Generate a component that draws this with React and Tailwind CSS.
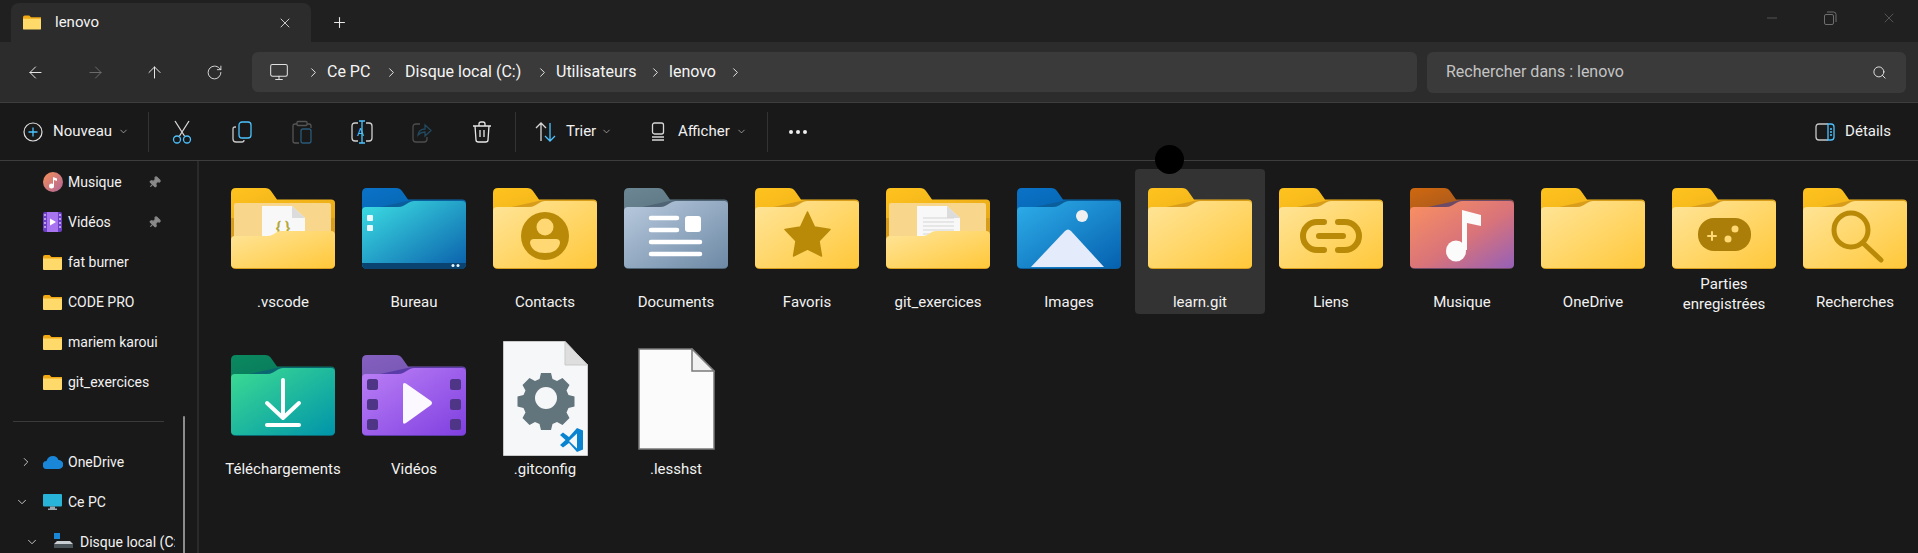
import { ArrowLeft, ArrowRight, ArrowUp, RotateCw, Monitor, ChevronRight, ChevronDown, Search, X, Plus, Minus, Pin } from "lucide-react";

const font = { fontFamily: '"Roboto", "Noto Sans", sans-serif' };

const gold = { back: ["#ffc31f", "#e6a714"], front: ["#ffe59a", "#ffc83a"], edge: "#d99d1c" };

// generic win11 style folder, 104x81
function Folder({ id, back = gold.back, front = gold.front, edge = gold.edge, open, children }) {
  return (
    <svg width="104" height="81" viewBox="0 0 104 81">
      <defs>
        <linearGradient id={`${id}b`} x1="0" y1="0" x2="1" y2="1">
          <stop offset="0" stopColor={back[0]} />
          <stop offset="1" stopColor={back[1]} />
        </linearGradient>
        <linearGradient id={`${id}f`} x1="0" y1="0" x2="1" y2="1">
          <stop offset="0" stopColor={front[0]} />
          {front[2] && <stop offset="0.55" stopColor={front[1]} />}
          <stop offset="1" stopColor={front[2] || front[1]} />
        </linearGradient>
      </defs>
      <path d="M0 5Q0 0 5 0H34Q38 0 40 3L46 11.5H100Q104 11.5 104 15V40H0Z" fill={`url(#${id}b)`} />
      {open ? (
        <>
          <path d="M0 30H104V76Q104 81 99 81H5Q0 81 0 76Z" fill={edge} />
          <rect x="3" y="15" width="97" height="40" rx="2" fill="#f8d78c" />
          <path d="M31 18H61L74 30V55H31Z" fill="#f8f8f8" />
          <path d="M61 18V30H74Z" fill="#dcdcdc" />
          {open === "code" ? (
            <text x="52" y="46" textAnchor="middle" fontSize="16" fontWeight="700" fill="#b5a83a" style={font}>{"{ }"}</text>
          ) : (
            <path d="M37 30H68M37 34H68M37 38H68M37 42H68M37 46H68" stroke="#d5d5d5" strokeWidth="1" />
          )}
          <path d="M0 52Q0 48 4 48H36Q39 48 42 46.5L46 44Q48 43 51 43H100Q104 43 104 47V76Q104 80 100 80H4Q0 80 0 76Z" fill={`url(#${id}f)`} />
        </>
      ) : (
        <>
          <path d="M0 23V76Q0 81 5 81H99Q104 81 104 76V16Q104 12 100 12H50Z" fill={edge} />
          <path d="M0 23Q0 19 4 19H36Q39 19 42 17.5L47 14.5Q49 13 52 13H100Q104 13 104 17V76Q104 80 100 80H4Q0 80 0 76Z" fill={`url(#${id}f)`} />
        </>
      )}
      {children}
    </svg>
  );
}

const GOLD_MARK = "#b98a08";

const Gitconfig = () => (
  <svg width="85" height="115" viewBox="0 0 85 115">
    <path d="M.5.5H62L84.5 24V114.5H.5Z" fill="#f6f7f8" stroke="#c9c9c9" />
    <path d="M62 .5V24H84.5Z" fill="#dedede" stroke="#c9c9c9" />
    <path
      d="M38 32h10l1.5 6 4.5 2 5.5-3 7 7-3 5.5 2 4.5 6 1.500v10l-6 1.500-2 4.500 3 5.500-7 7-5.500-3-4.500 2-1.500 6h-10l-1.500-6-4.500-2-5.500 3-7-7 3-5.500-2-4.500-6-1.500v-10l6-1.500 2-4.500-3-5.500 7-7 5.500 3 4.500-2z"
      fill="#62747c"
    />
    <circle cx="43" cy="57" r="11" fill="#f6f7f8" />
    <path d="M57 94l3-2.500 6 4.500 8-9 6 2.500v19l-6 2.500-8-9-6 4.500-3-2.500 5.500-5z" fill="#0a84d0" />
    <path d="M74 92.500v15L66 100z" fill="#f6f7f8" />
  </svg>
);

const Lesshst = () => (
  <svg width="77" height="102" viewBox="0 0 77 102">
    <path d="M1 1H54L76 23V101H1Z" fill="#fbfbfb" stroke="#7a7a7a" strokeWidth="1.500" />
    <path d="M54 1V23H76Z" fill="#f0f0f0" stroke="#7a7a7a" strokeWidth="1.500" />
  </svg>
);

const files = [
  { label: ".vscode", icon: <Folder id="a" open="code" /> },
  {
    label: "Bureau",
    icon: (
      <Folder id="b" back={["#0a72c8", "#045e9e"]} front={["#3de0e4", "#0a5fab"]} edge="#0a5e9c">
        <path d="M0 75H104V76Q104 81 99 81H5Q0 81 0 76Z" fill="#0a4370" />
        <rect x="5" y="27" width="6" height="6" rx="1" fill="#e8f8fb" />
        <rect x="5" y="37" width="6" height="6" rx="1" fill="#e8f8fb" />
        <circle cx="91" cy="77.500" r="1.500" fill="#e8f8fb" />
        <circle cx="96" cy="77.500" r="1.500" fill="#e8f8fb" />
      </Folder>
    ),
  },
  {
    label: "Contacts",
    icon: (
      <Folder id="c">
        <circle cx="52" cy="48" r="24" fill={GOLD_MARK} />
        <circle cx="52" cy="39" r="8.500" fill="#ffd873" />
        <path d="M41 51H63Q67 51 67 55Q65 65 52 65Q39 65 37 55Q37 51 41 51Z" fill="#ffd873" />
      </Folder>
    ),
  },
  {
    label: "Documents",
    icon: (
      <Folder id="d" back={["#6c8794", "#4f6672"]} front={["#b9cade", "#6d89a5"]} edge="#4f6475">
        <path d="M27 30H53M27 42H53M27 54H76M27 66H76" stroke="#fff" strokeWidth="4.500" strokeLinecap="round" />
        <rect x="61" y="28" width="16" height="16" rx="3" fill="#fff" />
      </Folder>
    ),
  },
  {
    label: "Favoris",
    icon: (
      <Folder id="e">
        <path d="M52.500 24L59.500 39L75 41.500L64 53L66.500 68L52.500 61L38.500 68L41 53L30 41.500L45.500 39Z" fill={GOLD_MARK} stroke={GOLD_MARK} strokeWidth="1.500" strokeLinejoin="round" />
      </Folder>
    ),
  },
  { label: "git_exercices", icon: <Folder id="f" open="text" /> },
  {
    label: "Images",
    icon: (
      <Folder id="g" back={["#0a72c8", "#045e9e"]} front={["#2eaeea", "#0560ae"]} edge="#0a5e9c">
        <circle cx="65" cy="28" r="6" fill="#f0f0f0" />
        <path d="M14 79L48 43Q51 40 54 43L87 79Z" fill="#e4ebfb" />
      </Folder>
    ),
  },
  { label: "learn.git", icon: <Folder id="h" />, selected: true },
  {
    label: "Liens",
    icon: (
      <Folder id="i">
        <path d="M45 34H38A14 14 0 0 0 38 62H45M59 34H66A14 14 0 0 1 66 62H59" fill="none" stroke={GOLD_MARK} strokeWidth="6" strokeLinecap="round" />
        <path d="M40 48H64" stroke={GOLD_MARK} strokeWidth="6" strokeLinecap="round" />
      </Folder>
    ),
  },
  {
    label: "Musique",
    icon: (
      <Folder id="j" back={["#d0680f", "#7c4a2e"]} front={["#fb9160", "#d8737a", "#9560b8"]} edge="#6d4a66">
        <ellipse cx="46" cy="63" rx="10" ry="10.500" fill="#fbfbfb" />
        <path d="M52 62V22L71 27V38L57 35V62Z" fill="#fbfbfb" />
      </Folder>
    ),
  },
  { label: "OneDrive", icon: <Folder id="k" /> },
  {
    label: "Parties enregistrées",
    icon: (
      <Folder id="l">
        <rect x="26" y="30" width="53" height="33" rx="16" fill="#aa7e08" />
        <path d="M40 44V52M36 48H44" stroke="#ffd873" strokeWidth="2" strokeLinecap="round" />
        <circle cx="63" cy="41" r="3.500" fill="#ffd873" />
        <circle cx="56" cy="51" r="3.500" fill="#ffd873" />
      </Folder>
    ),
  },
  {
    label: "Recherches",
    icon: (
      <Folder id="m">
        <circle cx="48" cy="42" r="17" fill="none" stroke={GOLD_MARK} strokeWidth="5" />
        <path d="M60 55L78 72" stroke={GOLD_MARK} strokeWidth="5" strokeLinecap="round" />
      </Folder>
    ),
  },
  {
    label: "Téléchargements",
    icon: (
      <Folder id="n" back={["#0a8a5f", "#0a6a58"]} front={["#3ddc92", "#0094aa"]} edge="#0a6670">
        <path d="M52 25V63M36 48L52 63L68 48" fill="none" stroke="#fff" strokeWidth="4" strokeLinecap="round" strokeLinejoin="round" />
        <path d="M36 70H68" stroke="#fff" strokeWidth="4" strokeLinecap="round" />
      </Folder>
    ),
  },
  {
    label: "Vidéos",
    icon: (
      <Folder id="o" back={["#8460c0", "#6c4fa6"]} front={["#bb80f6", "#7f3fe0"]} edge="#5a3ba8">
        {[24, 44, 64].map((y) => (
          <g key={y} fill="#4f3585">
            <rect x="5" y={y} width="11" height="11" rx="2.500" />
            <rect x="88" y={y} width="11" height="11" rx="2.500" />
          </g>
        ))}
        <path d="M41 30Q41 27 44 28.500L69 46Q71 48 69 50L44 68Q41 70 41 67Z" fill="#fbf8ff" />
      </Folder>
    ),
  },
  { label: ".gitconfig", icon: <Gitconfig />, file: true },
  { label: ".lesshst", icon: <Lesshst />, file: true },
];

function Tile({ item }) {
  return (
    <div className={`flex h-[145px] w-[130px] flex-col items-center rounded-sm pt-[5px] ${item.selected ? "bg-[#333333]" : ""}`}>
      <div className={`flex h-[115px] justify-center ${item.file ? "items-center" : "items-start pt-[14px]"}`}>{item.icon}</div>
      <div className="mt-[3px] text-center text-[15px] leading-[20px] text-[#f2f2f2]">
        {item.label === "Parties enregistrées" ? (
          <>
            Parties
            <br />
            enregistrées
          </>
        ) : (
          item.label
        )}
      </div>
    </div>
  );
}

const MiniFolder = ({ small }) => (
  <svg width={small ? 18 : 19} height="15" viewBox="0 0 19 15">
    <path d="M0 2Q0 0 2 0H6.500L8.500 2H19V5H0Z" fill="#f2aa14" />
    <path d="M0 3.500H18Q19 3.500 19 4.500V14Q19 15 18 15H1Q0 15 0 14Z" fill="#ffd969" />
  </svg>
);

const sideItems = [
  {
    label: "Musique",
    pin: true,
    icon: (
      <svg width="20" height="20" viewBox="0 0 20 20">
        <defs>
          <linearGradient id="sm" x1="0" y1="0" x2="1" y2="1">
            <stop offset="0" stopColor="#f59058" />
            <stop offset="1" stopColor="#b0649a" />
          </linearGradient>
        </defs>
        <circle cx="10" cy="10" r="10" fill="url(#sm)" />
        <circle cx="8.500" cy="14" r="2.500" fill="#fff" />
        <path d="M10 14V5L14 6.500V9L11 8V14Z" fill="#fff" />
      </svg>
    ),
  },
  {
    label: "Vidéos",
    pin: true,
    icon: (
      <svg width="19" height="20" viewBox="0 0 19 20">
        <rect width="19" height="20" rx="2" fill="#6d3fc4" />
        <rect x="4" y="0" width="11" height="20" fill="#a874f0" />
        <path d="M7 6.500L13 10L7 13.500Z" fill="#fff" />
        <path d="M1 3H3M1 7H3M1 11H3M1 15H3M16 3H18M16 7H18M16 11H18M16 15H18" stroke="#d5bff8" strokeWidth="1.500" />
      </svg>
    ),
  },
  { label: "fat burner", icon: <MiniFolder /> },
  { label: "CODE PRO", icon: <MiniFolder /> },
  { label: "mariem karoui", icon: <MiniFolder /> },
  { label: "git_exercices", icon: <MiniFolder /> },
];

const CmdSep = () => <div className="h-[40px] w-px bg-[#333333]" />;

const Crumb = ({ w, children }) => <span className={`${w} whitespace-nowrap text-[16px] text-[#f5f5f5]`}>{children}</span>;
const CrumbArrow = () => <ChevronRight size={15} strokeWidth={1.500} className="mx-[6px] text-[#f0f0f0]" />;

const IconCell = ({ children }) => <div className="flex w-[60px] items-center justify-center">{children}</div>;

export default function App() {
  return (
    <div style={font} className="relative flex h-[553px] w-[1918px] flex-col overflow-hidden bg-[#191919] text-white">
      {/* title bar */}
      <div className="flex h-[42px] shrink-0 items-end bg-[#202020] pl-[11px]">
        <div className="flex h-[39px] w-[300px] items-center rounded-t-lg bg-[#2c2c2c] pl-[12px] pr-[18px]">
          <MiniFolder small />
          <span className="ml-[14px] text-[15px] text-[#f5f5f5]">lenovo</span>
          <X size={16} strokeWidth={1.250} className="ml-auto text-[#e8e8e8]" />
        </div>
        <div className="flex h-[39px] w-[56px] items-center justify-center">
          <Plus size={17} strokeWidth={1.500} className="text-[#e8e8e8]" />
        </div>
        <div className="ml-auto flex h-[36px] items-center self-start pr-[21px] text-[#6e6e6e]">
          <Minus size={16} strokeWidth={1} />
          <svg width="14" height="14" viewBox="0 0 14 14" fill="none" stroke="currentColor" className="ml-[43px]">
            <rect x="1.500" y="3.500" width="9" height="10" rx="1.500" />
            <path d="M4 1H10.500Q13 1 13 3.500V11" />
          </svg>
          <X size={16} strokeWidth={1} className="ml-[44px]" />
        </div>
      </div>

      {/* address row */}
      <div className="flex h-[61px] shrink-0 items-center border-b border-[#3d3d3d] bg-[#2c2c2c]">
        <div className="flex w-[248px] items-center pl-[5px] text-[#e8e8e8]">
          <div className="flex w-[60px] justify-center"><ArrowLeft size={19} strokeWidth={1.250} /></div>
          <div className="flex w-[60px] justify-center text-[#6c6c6c]"><ArrowRight size={19} strokeWidth={1.250} /></div>
          <div className="flex w-[59px] justify-center"><ArrowUp size={19} strokeWidth={1.250} /></div>
          <div className="flex w-[60px] justify-center"><RotateCw size={17} strokeWidth={1.250} /></div>
        </div>
        <div className="ml-[4px] flex h-[40px] w-[1165px] items-center rounded-md bg-[#3a3a3a] pl-[17px]">
          <Monitor size={20} strokeWidth={1.250} className="mr-[11px] text-[#e0e0e0]" />
          <CrumbArrow />
          <Crumb w="w-[46px]">Ce PC</Crumb>
          <span className="w-[5px]" />
          <CrumbArrow />
          <Crumb w="w-[124px]">Disque local (C:)</Crumb>
          <span className="w-[-0px]" />
          <CrumbArrow />
          <Crumb w="w-[85px]">Utilisateurs</Crumb>
          <span className="w-[1px]" />
          <CrumbArrow />
          <Crumb w="w-[52px]">lenovo</Crumb>
          <span className="w-[1px]" />
          <CrumbArrow />
        </div>
        <div className="ml-[10px] flex h-[41px] w-[479px] items-center justify-between rounded-md bg-[#3a3a3a] pl-[19px] pr-[19px]">
          <span className="text-[16px] text-[#c4c4c4]">Rechercher dans : lenovo</span>
          <Search size={15} strokeWidth={1.500} className="text-[#e8e8e8]" />
        </div>
      </div>

      {/* command bar */}
      <div className="flex h-[58px] shrink-0 items-center border-b border-[#3d3d3d] bg-[#191919] pl-[23px] pr-[27px] text-[15px] text-[#f0f0f0]">
        <svg width="20" height="20" viewBox="0 0 20 20" fill="none" className="mr-[10px]">
          <circle cx="10" cy="10" r="9" stroke="#e0e0e0" strokeWidth="1.200" />
          <path d="M10 5.500V14.500M5.500 10H14.500" stroke="#4cc2ff" strokeWidth="1.300" />
        </svg>
        <span className="w-[59px]">Nouveau</span>
        <ChevronDown size={11} strokeWidth={1.500} className="ml-[6px] text-[#c8c8c8]" />
        <div className="ml-[19px]"><CmdSep /></div>
        <div className="ml-[3px] flex">
          <IconCell>
            <svg width="20" height="24" viewBox="0 0 20 24" fill="none" strokeWidth="1.300">
              <path d="M3 1L12.500 16M17 1L7.500 16" stroke="#d8d8d8" />
              <circle cx="5" cy="19.500" r="3.500" stroke="#4cc2ff" />
              <circle cx="15" cy="19.500" r="3.500" stroke="#4cc2ff" />
            </svg>
          </IconCell>
          <IconCell>
            <svg width="20" height="22" viewBox="0 0 20 22" fill="none" strokeWidth="1.300">
              <path d="M4 6H3Q1 6 1 8V18Q1 21 4 21H10Q12 21 12 19" stroke="#c8c8c8" />
              <rect x="7" y="1" width="12" height="16" rx="3" stroke="#4cc2ff" />
            </svg>
          </IconCell>
          <IconCell>
            <svg width="20" height="24" viewBox="0 0 20 24" fill="none" strokeWidth="1.300">
              <path d="M5 4H3Q1 4 1 6V21Q1 23 3 23H7" stroke="#555555" />
              <path d="M15 4H17Q19 4 19 6V8" stroke="#555555" />
              <rect x="5" y="1.500" width="10" height="4" rx="1" stroke="#555555" />
              <rect x="9" y="9" width="10" height="14" rx="2" stroke="#2a5a78" />
            </svg>
          </IconCell>
          <IconCell>
            <svg width="22" height="24" viewBox="0 0 22 24" fill="none" strokeWidth="1.300">
              <path d="M7 3H4Q1 3 1 6V18Q1 21 4 21H7M15 3H18Q21 3 21 6V18Q21 21 18 21H15" stroke="#d0d0d0" />
              <path d="M11 1V23M8 1H14M8 23H14" stroke="#4cc2ff" />
              <text x="6" y="16" fontSize="11" fill="#4cc2ff" style={font}>A</text>
            </svg>
          </IconCell>
          <IconCell>
            <svg width="20" height="22" viewBox="0 0 20 22" fill="none" strokeWidth="1.300">
              <path d="M8 3H4Q1 3 1 6V18Q1 21 4 21H12Q15 21 15 18V16" stroke="#4d4d4d" />
              <path d="M6 14Q7 8 13 8V4L19 9.500L13 15V11Q9 11 6 14Z" stroke="#23495f" />
            </svg>
          </IconCell>
          <IconCell>
            <svg width="20" height="22" viewBox="0 0 20 22" fill="none" stroke="#e8e8e8" strokeWidth="1.300">
              <path d="M1 5H19M7 5V3Q7 1 9 1H11Q13 1 13 3V5M3 5L4 19Q4 21 6.500 21H13.500Q16 21 16 19L17 5M8 9V16M12 9V16" />
            </svg>
          </IconCell>
        </div>
        <div className="ml-[3px]"><CmdSep /></div>
        <svg width="22" height="20" viewBox="0 0 22 20" fill="none" strokeWidth="1.300" className="ml-[19px] mr-[9px]">
          <path d="M6 19V1M1 6L6 1L11 6" stroke="#d8d8d8" />
          <path d="M15 1V19M10 14L15 19L20 14" stroke="#4cc2ff" />
        </svg>
        <span className="w-[29px]">Trier</span>
        <ChevronDown size={11} strokeWidth={1.500} className="ml-[6px] text-[#c8c8c8]" />
        <svg width="14" height="19" viewBox="0 0 14 19" fill="none" stroke="#d8d8d8" strokeWidth="1.300" className="ml-[39px] mr-[13px]">
          <rect x="1.500" y="1" width="11" height="11" rx="2" />
          <path d="M1 15H13M1 18H13" />
        </svg>
        <span className="w-[53px]">Afficher</span>
        <ChevronDown size={11} strokeWidth={1.500} className="ml-[5px] text-[#c8c8c8]" />
        <div className="ml-[20px]"><CmdSep /></div>
        <div className="ml-[21px] flex gap-[3px]">
          <span className="size-[4px] rounded-full bg-[#eeeeee]" />
          <span className="size-[4px] rounded-full bg-[#eeeeee]" />
          <span className="size-[4px] rounded-full bg-[#eeeeee]" />
        </div>
        <svg width="20" height="18" viewBox="0 0 20 18" fill="none" strokeWidth="1.300" className="ml-auto mr-[10px]">
          <path d="M13 1H4Q1 1 1 4V14Q1 17 4 17H13" stroke="#c8c8c8" />
          <path d="M13 1H16Q19 1 19 4V14Q19 17 16 17H13Z" stroke="#4cc2ff" />
          <path d="M15 6H17M15 9H17M15 12H17" stroke="#4cc2ff" />
        </svg>
        <span>Détails</span>
      </div>

      {/* body */}
      <div className="flex min-h-0 flex-1">
        <aside className="relative w-[199px] shrink-0 overflow-hidden border-r-2 border-[#2a2a2a] pt-[1px] text-[14px] text-[#f2f2f2]">
          {sideItems.map((item) => (
            <div key={item.label} className="flex h-[40px] items-center pl-[43px] pr-[36px]">
              <div className="flex w-[25px] items-center">{item.icon}</div>
              <span>{item.label}</span>
              {item.pin && <Pin size={13} fill="#8a8a8a" className="ml-auto rotate-45 text-[#8a8a8a]" />}
            </div>
          ))}
          <div className="ml-[13px] mt-[19px] h-px w-[151px] bg-[#3a3a3a]" />
          <div className="mt-[20px] flex h-[40px] items-center pl-[19px]">
            <ChevronRight size={14} strokeWidth={1.500} className="mr-[10px] text-[#d8d8d8]" />
            <svg width="20" height="13" viewBox="0 0 20 13" className="mr-[5px]">
              <path d="M4 13A4 4 0 0 1 3.500 5Q5 0 10 0Q14 0 15.500 4A4.500 4.500 0 0 1 16 13Z" fill="#1a86d8" />
            </svg>
            <span>OneDrive</span>
          </div>
          <div className="flex h-[40px] items-center pl-[15px]">
            <ChevronDown size={14} strokeWidth={1.500} className="mr-[14px] text-[#d8d8d8]" />
            <svg width="19" height="16" viewBox="0 0 19 16" className="mr-[6px]">
              <rect width="19" height="12.500" rx="1" fill="#28b4d8" />
              <path d="M7 12.500H12V14.500H14V16H5V14.500H7Z" fill="#9aa5ad" />
            </svg>
            <span>Ce PC</span>
          </div>
          <div className="flex h-[40px] items-center pl-[25px]">
            <ChevronDown size={14} strokeWidth={1.500} className="mr-[15px] text-[#d8d8d8]" />
            <svg width="19" height="15" viewBox="0 0 19 15" className="mr-[7px] -translate-y-[2px]">
              <path d="M3 8H16L19 11V15H0V11Z" fill="#c8ced2" />
              <rect y="11" width="19" height="4" fill="#4a5358" />
              <rect width="6" height="6" fill="#1a86d8" />
            </svg>
            <span className="w-[95px] overflow-hidden whitespace-nowrap">Disque local (C:)</span>
          </div>
          <div className="absolute bottom-0 left-[183px] top-[255px] w-[2px] rounded-t bg-[#8c8c8c]" />
        </aside>
        <main className="min-w-0 flex-1 overflow-hidden pl-[19px] pt-[8px]">
          <div className="grid w-[1710px] grid-cols-[repeat(13,130px)] gap-x-px gap-y-[22px]">
            {files.map((item) => (
              <Tile key={item.label} item={item} />
            ))}
          </div>
        </main>
      </div>

      {/* cursor spot from the screen capture */}
      <div className="absolute left-[1155px] top-[145px] size-[29px] rounded-full bg-black" />
    </div>
  );
}
